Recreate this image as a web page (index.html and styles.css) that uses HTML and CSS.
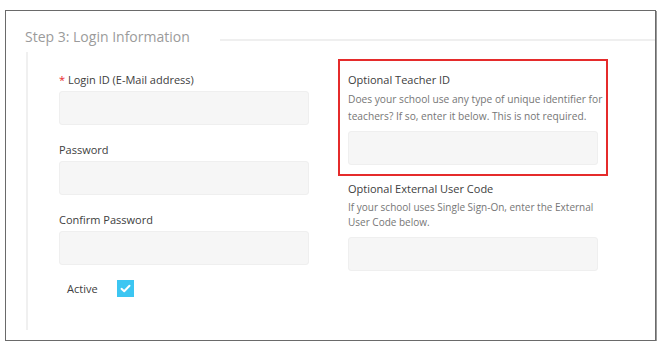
FILE: index.html
```html
<!DOCTYPE html>
<html lang="en">

<head>
    <meta charset="UTF-8" />
    <title>Step 3: Login Information</title>
    <link rel="stylesheet" href="styles.css">
</head>

<body>

    <div class="panel">
        <div class="step-header">
            <h3 class="step-title">Step 3: Login Information</h3>
            <div class="step-rule"></div>
        </div>

        <div class="step-body">
            <div class="form-col">
                <div class="field">
                    <label class="field-label"><span class="required">*</span> Login ID (E-Mail address)</label>
                    <input type="text" class="field-input" />
                </div>
                <div class="field">
                    <label class="field-label">Password</label>
                    <input type="password" class="field-input" />
                </div>
                <div class="field">
                    <label class="field-label">Confirm Password</label>
                    <input type="password" class="field-input" />
                </div>
                <div class="active-row">
                    <span class="active-label">Active</span>
                    <span class="check-box">
                        <svg width="11" height="9" viewBox="0 0 11 9">
                            <path d="M1.5 4.8 L4.2 7.2 L9.5 1.8" fill="none" stroke="#fff" stroke-width="2" stroke-linecap="round" stroke-linejoin="round" />
                        </svg>
                    </span>
                </div>
            </div>

            <div class="form-col right-col">
                <div class="highlight-box">
                    <label class="field-label">Optional Teacher ID</label>
                    <p class="field-help">Does your school use any type of unique identifier for teachers? If so, enter it below. This is not required.</p>
                    <input type="text" class="field-input" />
                </div>
                <div class="field plain">
                    <label class="field-label">Optional External User Code</label>
                    <p class="field-help small">If your school uses Single Sign-On, enter the External User Code below.</p>
                    <input type="text" class="field-input" />
                </div>
            </div>
        </div>
    </div>

</body>

</html>
```

FILE: styles.css
```css
body {
    background: #ffffff;
    font-family: "Open Sans", Arial, sans-serif;
    margin: 0;
    padding: 0;
}

.panel {
    width: 651px;
    height: 331px;
    margin: 10px 0 0 5px;
    border: 1px solid #6a6a6a;
    box-shadow: 1px 1px 0 #9a9a9a;
    box-sizing: border-box;
    display: flex;
    flex-direction: column;
}

.step-header {
    display: flex;
    align-items: center;
    padding: 16px 0 0 19px;
}

.step-title {
    margin: 0;
    font-size: 14px;
    font-weight: normal;
    line-height: 20px;
    color: #9b9b9b;
}

.step-rule {
    flex: 1;
    height: 2px;
    margin: 5px 0 0 30px;
    background: #efefef;
}

.step-body {
    flex: 1;
    display: flex;
    gap: 39px;
    margin: 5px 0 10px 20px;
    padding: 19px 0 0 31px;
    border-left: 2px solid #f0f0f0;
}

.form-col {
    width: 250px;
    display: flex;
    flex-direction: column;
}

.right-col {
    margin-top: -12px;
}

.field {
    display: flex;
    flex-direction: column;
    margin-bottom: 16px;
}

.field-label {
    font-size: 11px;
    line-height: 18px;
    color: #404040;
    margin-bottom: 2px;
}

.required {
    color: #e8262b;
}

.field-input {
    height: 34px;
    box-sizing: border-box;
    border: 1px solid #efefef;
    border-radius: 3px;
    background: #f6f6f6;
    outline: none;
}

.active-row {
    display: flex;
    align-items: center;
    gap: 19px;
    padding-left: 8px;
    margin-top: -1px;
}

.active-label {
    font-size: 11px;
    color: #404040;
}

.check-box {
    width: 17px;
    height: 17px;
    background: #3cc6f2;
    display: flex;
    align-items: center;
    justify-content: center;
}

.highlight-box {
    display: flex;
    flex-direction: column;
    margin-left: -10px;
    width: 270px;
    box-sizing: border-box;
    padding: 10px 8px 9px 8px;
    border: 2px solid #e52b2b;
}

.field-help {
    margin: 0 -10px 6px 0;
    font-size: 10.2px;
    line-height: 17px;
    color: #767676;
}

.field-help.small {
    margin-right: 0;
    font-size: 10px;
    line-height: 15px;
    margin-bottom: 7px;
}

.plain {
    margin-top: 4px;
}
```
